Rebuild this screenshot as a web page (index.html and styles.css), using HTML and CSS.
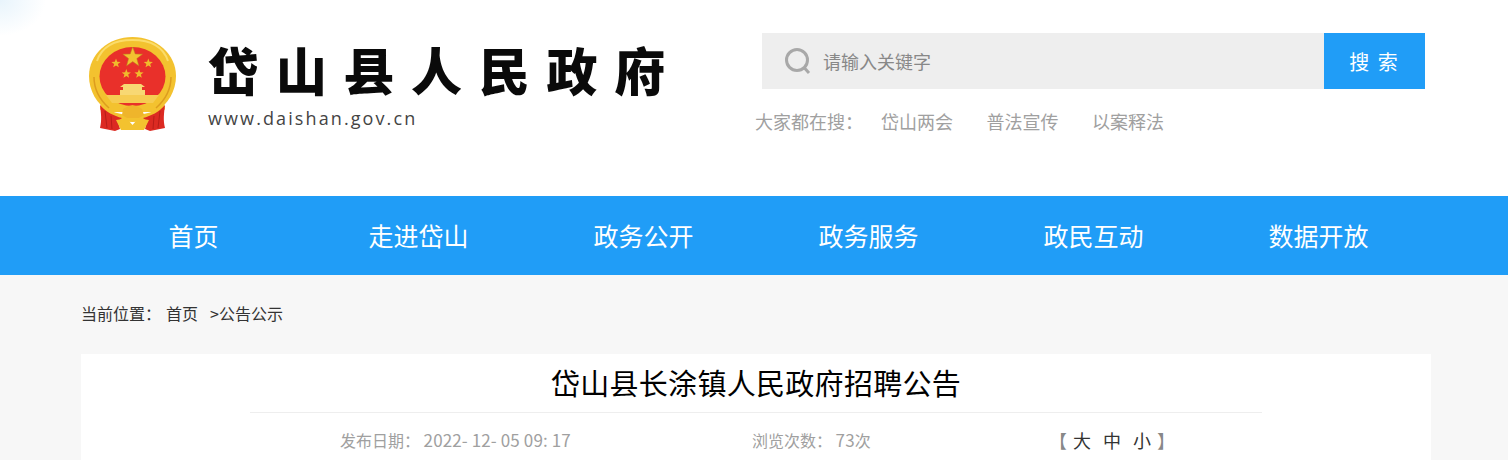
FILE: index.html
```html
<!DOCTYPE html>
<html lang="zh-CN">
<head>
  <meta charset="UTF-8" />
  <title>岱山县长涂镇人民政府招聘公告</title>
  <link rel="stylesheet" href="styles.css">
</head>
<body>
<header class="top">
  <div class="top-inner">
    <a class="logo">
      <svg class="emblem" viewBox="0 0 88 94" width="88" height="94">
        <path d="M43.500 0C67.500 0 87 17 87 39c0 15-8 28-20 36H20C8 67 0 54 0 39 0 17 19.500 0 43.500 0z" fill="#f3c22f"/>
        <path d="M8 24C13 9 27 3 43.500 3S74 9 79 24" fill="none" stroke="#fbdc6a" stroke-width="2"/>
        <path d="M5 40c0 12 6 23 15 31M82 40c0 12-6 23-15 31" fill="none" stroke="#dd9d1e" stroke-width="1.500"/>
        <ellipse cx="43.500" cy="39.500" rx="33" ry="29.500" fill="#e9302a"/>
        <polygon points="43.700,10 46.200,17 53.500,17.200 47.800,21.600 49.800,28.800 43.700,24.600 37.600,28.800 39.600,21.600 33.900,17.200 41.200,17" fill="#f3c130" stroke="#b98a1c" stroke-width=".5"/>
        <polygon points="27,21.500 28.200,24.800 31.600,24.900 28.900,27 29.800,30.300 27,28.400 24.200,30.300 25.100,27 22.400,24.900 25.800,24.800" fill="#f0bb2c"/>
        <polygon points="59.300,21.500 60.500,24.800 63.900,24.900 61.200,27 62.100,30.300 59.300,28.400 56.500,30.300 57.400,27 54.700,24.900 58.100,24.800" fill="#f0bb2c"/>
        <polygon points="37.300,32 38.500,35.300 41.900,35.400 39.200,37.500 40.100,40.800 37.300,38.900 34.500,40.800 35.400,37.500 32.700,35.400 36.100,35.300" fill="#f0bb2c"/>
        <polygon points="50,32 51.200,35.300 54.600,35.400 51.900,37.500 52.800,40.800 50,38.900 47.200,40.800 48.100,37.500 45.400,35.400 48.800,35.300" fill="#f0bb2c"/>
        <path d="M35 47h17l4 3h-3v3h3v5H31v-5h3v-3h-3z" fill="#f8d873"/>
        <path d="M17 58h53l-6 8H23z" fill="#f6cc52"/>
        <path d="M12 66c8 9 19 12 31.500 12S67 75 75 66l1 6c-6 9-18 13-32.500 13S17 81 11 72z" fill="#f3c22f"/>
        <path d="M11 68c6 7 14 11 22 13l-4 3 2 8-5 2-15-3c2-8 1-15 0-23z" fill="#dc2a22"/>
        <path d="M76 68c-6 7-14 11-22 13l4 3-2 8 5 2 15-3c-2-8-1-15 0-23z" fill="#dc2a22"/>
        <path d="M16 74l2 17M22 79l1 13M71 74l-2 17M65 79l-1 13" fill="none" stroke="#b81d18" stroke-width="1"/>
        <path d="M34 72c3-2 5-3 9.500-4 4 1 7 2 9.500 4l2 6-5 3h-12l-5-3z" fill="#efb52b"/>
        <path d="M27 83c6-1 10-1 13 1l3.500 4 3.500-4c3-2 7-2 13-1l-5 10H32z" fill="#f3c22f"/>
      </svg>
      <div class="logo-text">
        <div class="logo-name">岱山县人民政府</div>
        <div class="logo-url">www.daishan.gov.cn</div>
      </div>
    </a>
    <div class="search-area">
      <div class="search-box">
        <svg class="search-icon" viewBox="0 0 28 28" width="28" height="28">
          <circle cx="13" cy="13" r="10.500" fill="none" stroke="#a8a8a8" stroke-width="3"/>
          <path d="M20.500 21l4.500 5" stroke="#a8a8a8" stroke-width="3" fill="none"/>
        </svg>
        <span class="search-hint">请输入关键字</span>
        <button class="search-btn">搜 索</button>
      </div>
      <div class="hot">
        <span class="hot-label">大家都在搜：</span>
        <a>岱山两会</a>
        <a>普法宣传</a>
        <a>以案释法</a>
      </div>
    </div>
  </div>
</header>

<nav class="nav">
  <ul class="nav-list">
    <li>首页</li>
    <li>走进岱山</li>
    <li>政务公开</li>
    <li>政务服务</li>
    <li>政民互动</li>
    <li>数据开放</li>
  </ul>
</nav>

<main class="main">
  <div class="crumb">
    <span>当前位置：</span>
    <a>首页</a>
    <a>&gt;公告公示</a>
  </div>
  <article class="card">
    <h1 class="title">岱山县长涂镇人民政府招聘公告</h1>
    <div class="meta">
      <span>发布日期： <span class="num">2022- 12- 05 09: 17</span></span>
      <span>浏览次数： <span class="num">73</span>次</span>
      <span class="meta-size">
        <i>【</i>
        <a>大</a>
        <a>中</a>
        <a>小</a>
        <i>】</i>
      </span>
    </div>
  </article>
</main>
</body>
</html>
```

FILE: styles.css
```css
* {
  box-sizing: border-box;
}

html, body {
  height: 460px;
  overflow: hidden;
}

body {
  margin: 0;
  font-family: "Noto Sans CJK SC", "Liberation Sans", sans-serif;
  background: #f7f7f7;
  color: #333;
}

.top {
  height: 196px;
  background: radial-gradient(ellipse 46px 36px at 0 0, #e8f4fc, #ffffff) no-repeat;
  background-color: #fff;
}

.top-inner {
  width: 1350px;
  margin-left: 81px;
  display: flex;
  justify-content: space-between;
}

.logo {
  display: flex;
  padding: 37px 0 0 8px;
}

.logo-text {
  margin-left: 31px;
}

.logo-name {
  margin-top: -1px;
  height: 66px;
  line-height: 66px;
  font-size: 51px;
  font-weight: 900;
  letter-spacing: 16.700px;
  color: #0a0a0a;
  white-space: nowrap;
}

.logo-url {
  margin-top: 4px;
  font-family: "Open Sans", "Liberation Sans", sans-serif;
  font-size: 18px;
  line-height: 24px;
  letter-spacing: 2.100px;
  color: #444;
}

.search-area {
  width: 676px;
  padding-top: 33px;
}

.search-box {
  width: 663px;
  margin-left: 7px;
  height: 56px;
  background: #eeeeee;
  display: flex;
  align-items: center;
  padding-left: 22px;
}

.search-icon {
  flex: none;
}

.search-hint {
  flex: 1;
  margin-left: 11px;
  font-size: 18px;
  color: #888;
}

.search-btn {
  width: 101px;
  height: 56px;
  border: none;
  background: #209df7;
  color: #fff;
  font-family: inherit;
  font-size: 20px;
  letter-spacing: 2px;
}

.hot {
  display: flex;
  margin-top: 18px;
  font-size: 18px;
  line-height: 28px;
  color: #a0a0a0;
}

.hot-label {
  margin-right: 18px;
}

.hot a {
  margin-right: 33.500px;
}

.nav {
  height: 79px;
  background: #209df7;
}

.nav-list {
  list-style: none;
  margin: 0 0 0 81px;
  padding: 0;
  width: 1350px;
  display: grid;
  grid-template-columns: repeat(6, 225px);
}

.nav-list li {
  text-align: center;
  line-height: 79px;
  font-size: 25px;
  color: #fff;
}

.main {
  width: 1350px;
  margin-left: 81px;
}

.crumb {
  height: 79px;
  padding-top: 26px;
  font-size: 16px;
  line-height: 24px;
  color: #333;
  display: flex;
}

.crumb a {
  margin-left: 5px;
}

.crumb a + a {
  margin-left: 12px;
}

.card {
  background: #fff;
  height: 106px;
  overflow: hidden;
  padding: 0 169px;
}

.title {
  margin: 0;
  height: 59px;
  border-bottom: 1px solid #eeeeee;
  text-align: center;
  font-size: 29px;
  line-height: 56px;
  letter-spacing: .3px;
  font-weight: 400;
  color: #000;
}

.meta {
  font-size: 16px;
  line-height: 54px;
  color: #a0a0a0;
  display: grid;
  grid-template-columns: 412px 303px auto;
  padding-left: 90px;
}

.num {
  font-size: 17px;
  letter-spacing: .12px;
}

.meta-size {
  display: flex;
  gap: 12px;
  font-size: 18px;
  color: #333;
}

.meta-size i {
  font-style: normal;
  color: #888;
  margin: 0 -6px;
}
```
